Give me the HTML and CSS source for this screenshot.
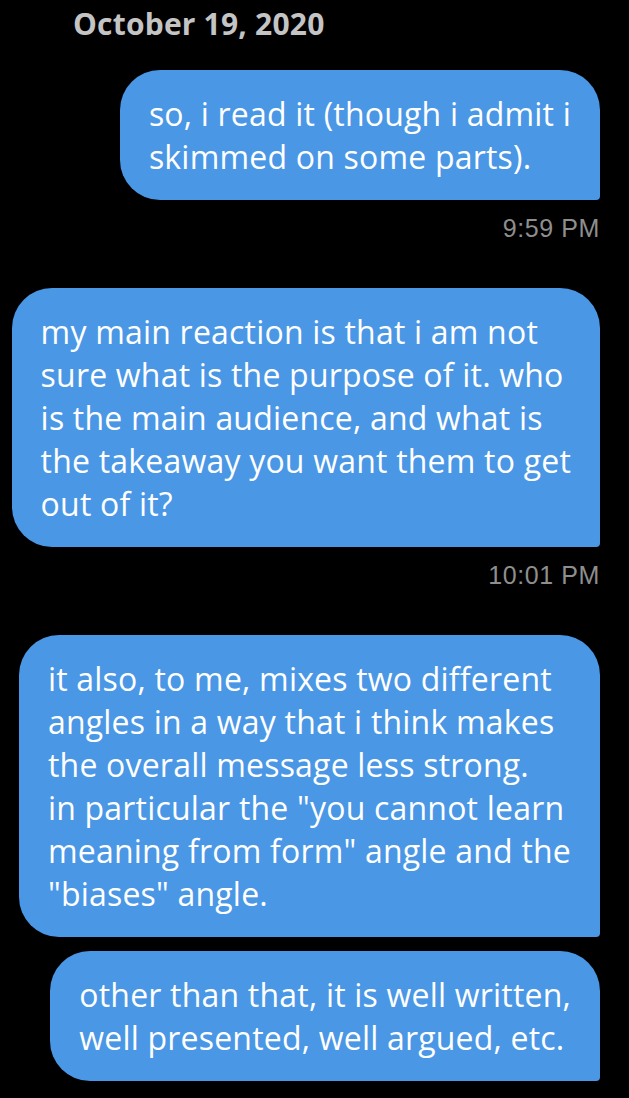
FILE: index.html
```html
<!DOCTYPE html>
<html>
<head>
    <title>Messages</title>
    <link rel="stylesheet" href="styles.css">
</head>
<body>
    <div id="chat">
        <div class="date">October 19, 2020</div>

        <div class="bubble">so, i read it (though i admit i<br>skimmed on some parts).</div>
        <div class="time">9:59 PM</div>

        <div class="bubble">my main reaction is that i am not<br>sure what is the purpose of it. who<br>is the main audience, and what is<br>the takeaway you want them to get<br>out of it?</div>
        <div class="time">10:01 PM</div>

        <div class="bubble">it also, to me, mixes two different<br>angles in a way that i think makes<br>the overall message less strong.<br>in particular the "you cannot learn<br>meaning from form" angle and the<br>"biases" angle.</div>
        <div class="bubble">other than that, it is well written,<br>well presented, well argued, etc.</div>
    </div>
</body>
</html>
```

FILE: styles.css
```css
body {
    margin: 0;
    background-color: #000;
    font-family: "Open Sans", Roboto, sans-serif;
    color: #fff;
}
#chat {
    display: flex;
    flex-direction: column;
    align-items: flex-end;
    padding: 7px 29px 16px 8px;
}
.date {
    align-self: flex-start;
    margin-left: 65px;
    font-size: 30px;
    line-height: 34px;
    font-weight: 700;
    letter-spacing: 0.2px;
    color: #c4c4c4;
    margin-bottom: 29px;
}
.bubble {
    background-color: #4a97e6;
    border-radius: 40px 40px 4px 40px;
    padding: 22px 29px;
    font-size: 32px;
    line-height: 43px;
    letter-spacing: 0.2px;
    white-space: nowrap;
    margin-bottom: 14px;
}
.time {
    font-family: "Liberation Sans", Arial, sans-serif;
    font-size: 25px;
    line-height: 28px;
    letter-spacing: 0.6px;
    color: #8e8e8e;
    margin-bottom: 46px;
}
```
